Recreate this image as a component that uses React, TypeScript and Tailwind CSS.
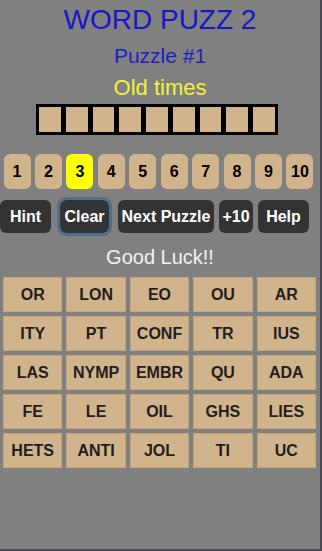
const numbers = ['1', '2', '3', '4', '5', '6', '7', '8', '9', '10'];

const tiles = [
  'OR', 'LON', 'EO', 'OU', 'AR',
  'ITY', 'PT', 'CONF', 'TR', 'IUS',
  'LAS', 'NYMP', 'EMBR', 'QU', 'ADA',
  'FE', 'LE', 'OIL', 'GHS', 'LIES',
  'HETS', 'ANTI', 'JOL', 'TI', 'UC',
];

export default function App() {
  return (
    <div
      className="w-[322px] h-[551px] bg-[#808080] flex flex-col items-center border-r-2 border-b-2 border-[#4a4a55] overflow-hidden"
      style={{ fontFamily: '"Liberation Sans", Arial, sans-serif' }}
    >
      {/* Titulos */}
      <h1 className="mt-[4px] text-[28px] leading-[32px] text-[#1818c8]">WORD PUZZ 2</h1>
      <div className="mt-[8px] text-[21px] leading-[24px] text-[#2020c0]">Puzzle #1</div>
      <div className="mt-[8px] text-[22px] leading-[24px] text-[#f2f23a]">Old times</div>

      {/* Casillas de respuesta */}
      <div className="mt-[4px] ml-[-6px] h-[31px] bg-black p-[3px] flex gap-[5px]">
        {Array.from({ length: 9 }).map((_, i) => (
          <div key={i} className="w-[21.7px] h-full bg-[#d2b48c]" />
        ))}
      </div>

      {/* Numeros de puzzle */}
      <div className="mt-[19px] w-[310px] ml-[-3px] flex justify-between">
        {numbers.map((n) => (
          <div
            key={n}
            className={`w-[27px] h-[35px] rounded-[6px] flex items-center justify-center text-[16px] font-bold text-black ${
              n === '3' ? 'bg-[#ffff00]' : 'bg-[#d2b48c]'
            }`}
          >
            {n}
          </div>
        ))}
      </div>

      {/* Botones */}
      <div className="mt-[11px] w-full flex items-center text-[16px] font-bold text-white">
        <div className="w-[51px] h-[33px] rounded-[6px] bg-[#333333] flex items-center justify-center">Hint</div>
        <div className="ml-[9px] w-[49px] h-[33px] rounded-[6px] bg-[#333333] flex items-center justify-center outline-[3px] outline-solid outline-[#50708a]">
          Clear
        </div>
        <div className="ml-[9px] w-[96px] h-[33px] rounded-[6px] bg-[#333333] flex items-center justify-center">Next Puzzle</div>
        <div className="ml-[5px] w-[34px] h-[33px] rounded-[6px] bg-[#333333] flex items-center justify-center">+10</div>
        <div className="ml-[5px] w-[51px] h-[33px] rounded-[6px] bg-[#333333] flex items-center justify-center">Help</div>
      </div>

      <div className="mt-[12px] text-[20px] leading-[24px] text-[#f2f2f2]">Good Luck!!</div>

      {/* Fichas */}
      <div className="mt-[8px] w-[313px] ml-[-1px] grid grid-cols-5 gap-x-[4px] gap-y-[4px]">
        {tiles.map((t, i) => (
          <div
            key={i}
            className="h-[35px] bg-[#d2b48c] border border-[#c4a47c] flex items-center justify-center text-[16px] font-bold text-[#1e1e1e]"
          >
            {t}
          </div>
        ))}
      </div>
    </div>
  );
}
